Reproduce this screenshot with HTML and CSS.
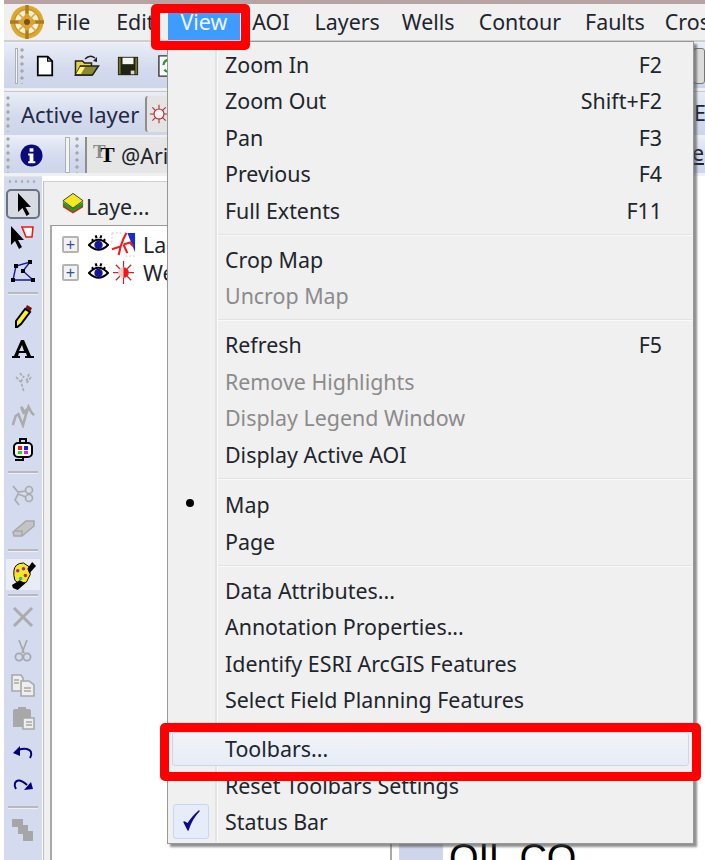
FILE: index.html
```html
<!DOCTYPE html>
<html lang="en">
<head>
<meta charset="utf-8">
<title>View menu</title>
<link rel="stylesheet" href="styles.css">
</head>
<body>
<div class="page">
  <div class="app">
    <nav class="menubar">
      <svg class="logo" viewBox="0 0 36 36"><circle cx="18" cy="18" r="16.5" fill="#dca92c"/><circle cx="18" cy="18" r="12.5" fill="#f7efcf" stroke="#c8952a" stroke-width="1.5"/><path d="M18 1v34M1 18h34" stroke="#a97c1e" stroke-width="3.4"/><path d="M18 9l9 9-9 9-9-9z" fill="#d9a334"/><path d="M9 9l18 18M27 9L9 27" stroke="#d6aa4a" stroke-width="1.6"/><circle cx="18" cy="18" r="3" fill="#7a5212"/></svg>
      <span class="mi">File</span>
      <span class="mi mi-edit">Edit</span>
      <span class="mi mi-on">View</span>
      <span class="mi mi-aoi">AOI</span>
      <span class="mi mi-layers">Layers</span>
      <span class="mi">Wells</span>
      <span class="mi mi-contour">Contour</span>
      <span class="mi mi-faults">Faults</span>
      <span class="mi mi-cross">Cross</span>
    </nav>
    <div class="tb tb1">
      <i class="bar bar-lead"></i>
      <i class="grip"></i>
      <svg class="ic ic-new" viewBox="0 0 20 24"><path d="M2 1.500h11l5 5V22.500H2z" fill="#fff" stroke="#000" stroke-width="2"/><path d="M13 1.500v5h5" fill="none" stroke="#000" stroke-width="1.500"/></svg>
      <svg class="ic ic-open" viewBox="0 0 26 22"><path d="M1.500 20V6h7l2 2h7v12z" fill="#e8d24a" stroke="#222" stroke-width="1.500"/><path d="M1.500 20l5-9h18l-6 9z" fill="#8c8a2e" stroke="#222" stroke-width="1.500"/><path d="M2 19l4-7h5l-4 7z" fill="#fff36a"/><path d="M11 4q5-5 10-1" fill="none" stroke="#222" stroke-width="1.600"/><path d="M19 6l4-4v5z" fill="#222"/></svg>
      <svg class="ic ic-save" viewBox="0 0 24 22"><path d="M1 1h22v20H1z" fill="#222210"/><path d="M2 2h2v18H2zM20 2h2v18h-2z" fill="#74742c"/><path d="M6 2h12v7H6z" fill="#f4f4f4"/><path d="M15 16h4v4h-4z" fill="#d8d8d8"/></svg>
      <svg class="ic ic-last" viewBox="0 0 24 24"><path d="M1 1h22v22H1z" fill="#fff" stroke="#333" stroke-width="1.500"/><path d="M6 11a5 5 0 0 1 7-5M7 16a5 5 0 0 0 6 2" fill="none" stroke="#1e9a2e" stroke-width="2.600"/></svg>
      <span class="tb-end"></span>
    </div>
    <div class="tb tb2">
      <i class="grip"></i>
      <span class="tb-label">Active layer</span>
      <span class="combo combo-layer"><svg class="ic-well" viewBox="0 0 24 24"><path d="M12 1v22M1 12h22M4 4l16 16M20 4L4 20" stroke="#a83232" stroke-width="1.300"/><circle cx="12" cy="12" r="6" fill="#f4f4f4" stroke="#c02020" stroke-width="1.300"/></svg></span>
      <span class="edge-e">E</span>
    </div>
    <div class="tb tb3">
      <i class="grip"></i>
      <svg class="ic-info" viewBox="0 0 24 24"><circle cx="12" cy="12" r="11.500" fill="#0a0a78"/><rect x="10" y="4.500" width="4" height="3.500" fill="#fff"/><path d="M8.500 10H14v8h2v2H8.500v-2H10v-6H8.500z" fill="#fff"/></svg>
      <i class="bar"></i>
      <i class="grip"></i>
      <span class="combo combo-font"><span class="tt"><span class="tt-back">T</span>T</span><span class="font-name">@Arial</span></span>
      <span class="edge-eg">eg</span>
    </div>
    <div class="main">
      <aside class="side">
        <i class="side-grip"></i>
        <button class="tool tool-on" type="button"><svg viewBox="0 0 24 24"><path d="M7 1v19l4.500-4 4 8 3-2-4-7H20z" fill="#000"/></svg></button>
        <button class="tool" type="button"><svg class="wide" viewBox="0 0 26 24"><path d="M1 1v19l4-4 4 8 3-2-4-7h6z" fill="#000"/><path d="M12 2h11l-1 10h-6z" fill="#fff" stroke="#f01818" stroke-width="1.600"/></svg></button>
        <button class="tool" type="button"><svg class="wide" viewBox="0 0 26 24"><path d="M3 21L6 7l14-4-7 9 10 9z" fill="none" stroke="#1a1a9a" stroke-width="1.400"/><path d="M1 19h4v4H1zM4 5h4v4H4zM18 1h4v4h-4zM11 10h4v4h-4zM21 19h4v4h-4z" fill="#000"/></svg></button>
        <i class="tsep"></i>
        <button class="tool" type="button"><svg viewBox="0 0 24 24"><path d="M16 1l5 3-2 4-5-3z" fill="#7a1010"/><path d="M14 5l5 3L10 20l-5 4 0-7z" fill="#ffee33" stroke="#000" stroke-width="2"/></svg></button>
        <button class="tool" type="button"><svg viewBox="0 -3 24 24"><path d="M10 0h3l7 16h3v2h-9v-2h2l-1-3H8l-1 3h2v2H1v-2h2zM11 5l-3 6h5z" fill="#000" fill-rule="evenodd"/></svg></button>
        <button class="tool" type="button"><svg viewBox="0 0 24 24"><path d="M5 6l5 5 3 10M10 11l3-6M9 2l3 4M18 3l-3 8M20 6l-5 7" fill="none" stroke="#ababab" stroke-width="1.700" stroke-dasharray="3 1.500"/></svg></button>
        <button class="tool" type="button"><svg class="wide" viewBox="0 0 26 26"><path d="M2 23l3-10 3-2 2 5 3 7 3-11 3-9 3 6 3 3M14 11l-3-8 4 6 3-4" fill="none" stroke="#ababab" stroke-width="2.800"/></svg></button>
        <button class="tool" type="button"><svg viewBox="0 0 24 24"><path d="M9 5V1h6v4" fill="none" stroke="#000" stroke-width="2"/><rect x="3" y="5" width="18" height="14" rx="4" fill="#fff" stroke="#000" stroke-width="2"/><path d="M7 8h4v4H7z" fill="#f01818"/><path d="M13 8h4v4h-4z" fill="#1818f0"/><path d="M7 13h4v3H7z" fill="#18e018"/><path d="M13 13h4v3h-4z" fill="#f018e0"/><path d="M12 19v3H4" fill="none" stroke="#000" stroke-width="2"/></svg></button>
        <i class="tsep"></i>
        <button class="tool" type="button"><svg class="wide" viewBox="0 0 24 24"><circle cx="18" cy="7" r="3.500" fill="none" stroke="#ababab" stroke-width="1.700"/><circle cx="18" cy="15" r="3.500" fill="none" stroke="#ababab" stroke-width="1.700"/><path d="M2 3l5 6 8-1M15 14l-8-3-3 6 4 5" fill="none" stroke="#ababab" stroke-width="1.700"/></svg></button>
        <button class="tool" type="button"><svg class="wide" viewBox="0 0 24 24"><path d="M2 16L15 5h8v5L11 20H3z" fill="#c4c4c4" stroke="#a8a8a8" stroke-width="1.600"/><path d="M3 15h8v5" fill="none" stroke="#a8a8a8" stroke-width="1.600"/></svg></button>
        <i class="tsep"></i>
        <button class="tool tool-light" type="button"><svg class="paint" viewBox="0 0 26 30"><path d="M3 10q1-8 10-8l6 4 1 8-4 8-7 2-5-4-1-5z" fill="#f4e820" stroke="#000" stroke-width="1"/><path d="M17 8l5-7 4 4-7 8z" fill="#000"/><path d="M1 25l8-5 6 3-8 7-5-2z" fill="#000"/><circle cx="7" cy="10" r="1.800" fill="#b01ab0"/><circle cx="13" cy="8" r="1.800" fill="#b01ab0"/><circle cx="15" cy="15" r="1.800" fill="#d02020"/><circle cx="10" cy="18" r="1.800" fill="#20b0c0"/></svg></button>
        <i class="tsep"></i>
        <button class="tool" type="button"><svg viewBox="0 0 24 24"><path d="M3 3l18 18M21 3L3 21" stroke="#ababab" stroke-width="3"/></svg></button>
        <button class="tool" type="button"><svg viewBox="0 0 24 24"><path d="M8 1l5 13M16 1l-5 13" stroke="#a8a8a8" stroke-width="1.700"/><circle cx="8" cy="18" r="3.600" fill="none" stroke="#a8a8a8" stroke-width="1.800"/><circle cx="16" cy="18" r="3.600" fill="none" stroke="#a8a8a8" stroke-width="1.800"/></svg></button>
        <button class="tool" type="button"><svg viewBox="0 0 24 24"><path d="M1 2h9l2 3v13H1z" fill="#eee" stroke="#a8a8a8" stroke-width="1.600"/><path d="M10 8h8l5 4v11H10z" fill="#eee" stroke="#a8a8a8" stroke-width="1.600"/><path d="M13 15h7M13 18h7M3 7h5M3 10h5" stroke="#a8a8a8" stroke-width="1.300"/></svg></button>
        <button class="tool" type="button"><svg viewBox="0 0 24 24"><path d="M2 5q0-2 2-2h3V1h8v2h3q2 0 2 2v16H2z" fill="#a8a8a8"/><path d="M12 12h11v11H12z" fill="#eee" stroke="#a8a8a8" stroke-width="1.600"/><path d="M15 16h6M15 19h6" stroke="#a8a8a8" stroke-width="1.400"/></svg></button>
        <button class="tool" type="button"><svg viewBox="0 0 24 16"><path d="M2 9l7-7v10z" fill="#00007a"/><path d="M7 6q10-3 13 2 1 3-1 6" fill="none" stroke="#00007a" stroke-width="2"/></svg></button>
        <button class="tool" type="button"><svg viewBox="0 0 24 16"><path d="M22 12l-9 1 7-8z" fill="#00007a"/><path d="M16 8Q7 0 4 6q-1 3 1 6" fill="none" stroke="#00007a" stroke-width="2"/></svg></button>
        <i class="tsep"></i>
        <button class="tool" type="button"><svg viewBox="0 0 24 24"><path d="M1 1h11v6h5v6h5v10H12v-7H7V9H1z" fill="#a6a6a6"/></svg></button>
      </aside>
      <section class="panel">
        <div class="panel-tab">
          <svg class="stack" viewBox="0 0 24 24"><path d="M1 13l11 7 11-7v3l-11 7-11-7z" fill="#e02020"/><path d="M1 10l11 7 11-7v4l-11 7-11-7z" fill="#1ca01c"/><path d="M12 1l11 8-11 8L1 9z" fill="#f4e820" stroke="#333" stroke-width="1"/></svg>
          <span class="tab-text">Laye...</span>
        </div>
        <div class="tree">
          <div class="row">
            <span class="plus">+</span>
            <svg class="eye" viewBox="0 0 22 20"><path d="M1 11q10-11 20 0-10 10-20 0z" fill="#fff" stroke="#000" stroke-width="2.200"/><circle cx="11" cy="11" r="4.400" fill="#14149c"/><path d="M4 5l2 2M8 1l1 3M14 1l-1 3M18 5l-2 2" stroke="#000" stroke-width="2.200"/></svg>
            <svg class="layer-ic" viewBox="0 0 26 26"><path d="M17 1h8v20z" fill="#1a2ccc"/><path d="M1 1h12M1 1v12M25 25H14" fill="none" stroke="#ccc" stroke-dasharray="2 2"/><path d="M1 18l9-3 3-8 3-6M10 15l-2 9M13 13l7-2 3 4M13 13l4 9" fill="none" stroke="#f01c1c" stroke-width="2.200"/></svg>
            <span class="row-text">Landgrid</span>
          </div>
          <div class="row">
            <span class="plus">+</span>
            <svg class="eye" viewBox="0 0 22 20"><path d="M1 11q10-11 20 0-10 10-20 0z" fill="#fff" stroke="#000" stroke-width="2.200"/><circle cx="11" cy="11" r="4.400" fill="#14149c"/><path d="M4 5l2 2M8 1l1 3M14 1l-1 3M18 5l-2 2" stroke="#000" stroke-width="2.200"/></svg>
            <svg class="layer-ic" viewBox="0 0 26 26"><path d="M13 1v24M2 13h22M5 5l16 16M21 5L5 21" stroke="#a83232" stroke-width="1.300"/><circle cx="13" cy="13" r="5.500" fill="#f4caca"/><path d="M13 7.500a5.500 5.500 0 0 1 0 11z" fill="#ee1818"/></svg>
            <span class="row-text">Wells</span>
          </div>
        </div>
      </section>
      <section class="canvas">
        <span class="canvas-strip"></span>
        <span class="oil">OIL CO</span>
      </section>
    </div>
  </div>

  <div class="dropdown">
    <div class="item"><span>Zoom In</span><span class="key">F2</span></div>
    <div class="item"><span>Zoom Out</span><span class="key">Shift+F2</span></div>
    <div class="item"><span>Pan</span><span class="key">F3</span></div>
    <div class="item"><span>Previous</span><span class="key">F4</span></div>
    <div class="item"><span>Full Extents</span><span class="key">F11</span></div>
    <hr class="sep">
    <div class="item"><span>Crop Map</span></div>
    <div class="item off"><span>Uncrop Map</span></div>
    <hr class="sep">
    <div class="item"><span>Refresh</span><span class="key">F5</span></div>
    <div class="item off"><span>Remove Highlights</span></div>
    <div class="item off"><span>Display Legend Window</span></div>
    <div class="item"><span>Display Active AOI</span></div>
    <hr class="sep">
    <div class="item item-map"><i class="dot"></i><span>Map</span></div>
    <div class="item"><span>Page</span></div>
    <hr class="sep">
    <div class="item"><span>Data Attributes...</span></div>
    <div class="item"><span>Annotation Properties...</span></div>
    <div class="item"><span>Identify ESRI ArcGIS Features</span></div>
    <div class="item"><span>Select Field Planning Features</span></div>
    <hr class="sep">
    <div class="item hot"><span>Toolbars...</span></div>
    <div class="item"><span>Reset Toolbars Settings</span></div>
    <div class="item"><span class="check"><svg viewBox="0 0 20 24"><path d="M3 13l4 8Q11 9 18 2 10 9 7 15z" fill="#0c0c8c" stroke="#0c0c8c" stroke-width="1.400" stroke-linejoin="round"/></svg></span><span>Status Bar</span></div>
  </div>
  <div class="mark mark-view"></div>
  <div class="mark mark-toolbars"></div>
</div>
</body>
</html>
```

FILE: styles.css
```css
* { box-sizing: border-box; }
html, body { margin: 0; padding: 0; background: #fff; }
.page {
  position: relative;
  width: 705px;
  height: 860px;
  overflow: hidden;
  font-family: "Noto Sans", "Open Sans", sans-serif;
  font-size: 21.4px;
  color: #20252c;
  background: #fff;
}
.app {
  margin-left: 4px;
  height: 860px;
  display: flex;
  flex-direction: column;
  border-top: 4px solid #b7a3a3;
  background: #f0f0f0;
}
.menubar {
  height: 38px;
  flex: none;
  display: flex;
  align-items: center;
  padding-left: 5px;
  white-space: nowrap;
  background: #f0f0f0;
  border-bottom: 2px solid #cfcfcf;
}
.logo { width: 36px; height: 36px; flex: none; }
.mi { padding: 0 11px; line-height: 27px; margin-top: -2px; }
.mi-edit { margin-left: 4px; }
.mi-on {
  background: #3e9bff;
  color: #eef6ff;
  margin: 0 0 0 2px;
  padding: 0 13px;
  height: 28px;
  line-height: 19px;
  align-self: flex-end;
}
.mi-aoi { margin-left: 1px; }
.mi-layers { margin-left: 3px; }
.mi-contour { margin-left: 2px; }
.mi-faults { margin-left: 2px; }
.mi-cross { margin-left: -2px; }
.tb {
  display: flex;
  align-items: center;
  flex: none;
  white-space: nowrap;
  overflow: hidden;
  background: linear-gradient(#e9edf6, #d4dbee 55%, #cdd5ea);
  position: relative;
}
.tb1 { height: 45px; padding-left: 11px; margin-top: 1px; }
.tb2 { height: 44px; padding-left: 2px; margin-top: 3px; padding-top: 1px; border-top: 1px solid #c8c8c8; }
.tb3 { height: 36px; padding-left: 2px; margin-top: 2px; }
.grip {
  width: 5px;
  height: 36px;
  flex: none;
  background: radial-gradient(circle at 2px 2px, #a8a8a8 1.400px, transparent 1.900px) 0 0 / 5px 7px;
}
.ic { flex: none; height: 22px; }
.ic-new { width: 18px; margin-left: 11px; }
.ic-open { width: 26px; margin-left: 20px; }
.ic-save { width: 22px; margin-left: 17px; }
.ic-last { width: 22px; margin-left: 19px; }
.tb-end {
  position: absolute;
  right: 0;
  top: 5px;
  width: 12px;
  height: 36px;
  border: 1px solid #777;
  border-radius: 3px;
  background: #dcdcdc;
}
.tb-label { margin-left: 10px; width: 122px; font-size: 22px; color: #1f2a44; }
.combo {
  display: flex;
  align-items: center;
  height: 36px;
  background: #e4e4e4;
  flex: none;
}
.combo-layer { width: 60px; padding-left: 2px; margin-left: 2px; border-left: 2px solid #8e8e8e; border-radius: 3px 0 0 3px; }
.ic-well { width: 20px; height: 24px; }
.edge-e { position: absolute; left: 690px; top: 6px; }
.ic-info { width: 23px; height: 23px; margin: 0 22px 0 9px; flex: none; }
.bar { width: 5px; height: 36px; flex: none; border: 1px solid #aeb0b8; margin-right: 5px; background: #f4f4f4; }
.bar-lead { width: 3px; margin-right: 2px; }
.combo-font { width: 400px; height: 36px; margin-left: 5px; padding-left: 6px; background: #e6e6e6; border-left: 2px solid #8e8e8e; }
.tt { position: relative; display: block; font: bold 22px/24px "Liberation Serif", serif; color: #000; width: 28px; padding-left: 7px; }
.tt-back { position: absolute; left: 0; top: -3px; color: #8a8a8a; font-size: 19px; }
.edge-eg { position: absolute; left: 688px; top: 1px; text-decoration: underline; }
.main { flex: 1; display: flex; min-height: 0; margin-top: 3px; background: #fff; }
.side {
  width: 38px;
  flex: none;
  display: flex;
  flex-direction: column;
  align-items: center;
  padding-top: 10px;
  background: #d4dbee;
  border-top: 1px solid #e4e4e4;
}
.side-grip {
  position: absolute;
  left: 8px;
  top: 180px;
  width: 30px;
  height: 3px;
  background: radial-gradient(circle at 2px 1.500px, #b4b4b4 1.200px, transparent 1.600px) 0 0 / 6px 3px;
}
.tool {
  width: 34px;
  height: 33.600px;
  flex: none;
  padding: 0;
  border: 0;
  background: transparent;
  display: flex;
  align-items: center;
  justify-content: center;
}
.tool svg { width: 24px; height: 24px; }
.tool svg.wide { width: 26px; height: 24px; }
.tool svg.paint { width: 25px; height: 29px; margin-top: 3px; flex: none; }
.tool-on { background: #d9dbe2; border: 2px solid #6d7280; border-radius: 5px; height: 30px; margin: 2px 0 1.600px; }
.tool-light { background: #e9ecf5; height: 31px; margin: 2.600px 0 0; }
.tsep { width: 30px; height: 3px; margin: 4px 0; flex: none; background: #b9b9bd; border-bottom: 1px solid #eee; }
.panel {
  width: 347px;
  flex: none;
  margin: 5px 0 0 1px;
  border-top: 1px solid #d0d0d0;
  border-left: 1px solid #bcbcbc;
  background: #f0f0f0;
  padding-left: 6px;
  display: flex;
  flex-direction: column;
}
.panel-tab { display: flex; align-items: center; height: 43px; padding: 5px 0 0 12px; }
.tab-text { margin-left: 2px; }
.stack { width: 22px; height: 23px; flex: none; margin-top: -5px; }
.tree { flex: 1; background: #fff; border-top: 1px solid #999; border-left: 2px solid #a9a9a9; padding-top: 4px; }
.row { display: flex; align-items: center; height: 28px; padding-left: 10px; white-space: nowrap; overflow: hidden; }
.plus {
  width: 17px;
  height: 17px;
  flex: none;
  border: 2px solid #b4b4b4;
  border-radius: 2px;
  background: #f2f2f2;
  color: #33509a;
  font: 16px/13px "Liberation Sans", sans-serif;
  text-align: center;
}
.eye { width: 21px; height: 20px; margin-left: 9px; flex: none; }
.layer-ic { width: 25px; height: 25px; margin-left: 2px; flex: none; }
.row-text { margin-left: 7px; }
.canvas { flex: 1; position: relative; background: #fff; border-left: 2px solid #a9a9a9; }
.canvas-strip { position: absolute; left: 7px; bottom: 0; width: 44px; height: 20px; background: #cfd6ec; }
.oil { position: absolute; left: 57px; top: 660px; font: 38px/44px "Liberation Sans", sans-serif; color: #000; white-space: nowrap; }

.dropdown {
  position: absolute;
  left: 167px;
  top: 41px;
  width: 527px;
  height: 803px;
  padding: 4px 31px 0 57px;
  background: #f0f0f0;
  border: 1px solid #979797;
  box-shadow: 3px 3px 2px rgba(70, 70, 70, .6);
  z-index: 2;
}
.dropdown::before {
  content: "";
  position: absolute;
  left: 47px;
  top: 1px;
  bottom: 1px;
  width: 2px;
  background: #e3e3e3;
  border-right: 1px solid #fbfbfb;
}
.item {
  position: relative;
  display: flex;
  justify-content: space-between;
  align-items: center;
  height: 36.500px;
  white-space: nowrap;
}
.item-map { height: 38px; }
.off { color: #8b8b8b; }
.sep { margin: 5px -30px 5.500px -8px; height: 2px; border: 0; background: #e2e2e2; border-bottom: 1px solid #fafafa; }
.dot {
  position: absolute;
  left: -39px;
  top: 14px;
  width: 8px;
  height: 8px;
  border-radius: 50%;
  background: #000;
}
.hot::before {
  content: "";
  position: absolute;
  left: -53px;
  right: -27px;
  top: 1px;
  bottom: 1px;
  border: 1px solid #c5d8f2;
  border-radius: 3px;
  background: linear-gradient(#f2f3f8, #e6ecf6);
}
.hot span { position: relative; }
.check {
  position: absolute;
  left: -52px;
  top: 0;
  width: 36px;
  height: 35px;
  display: flex;
  align-items: center;
  justify-content: center;
  border: 1px solid #c5d8f2;
  border-radius: 3px;
  background: #e6edf8;
}
.check svg { width: 20px; height: 24px; }
.mark {
  position: absolute;
  border: 9px solid #ff0000;
  border-radius: 5px;
  z-index: 3;
}
.mark-view { left: 151px; top: 4px; width: 99px; height: 46px; }
.mark-toolbars { left: 160px; top: 723px; width: 541px; height: 58px; }
```
